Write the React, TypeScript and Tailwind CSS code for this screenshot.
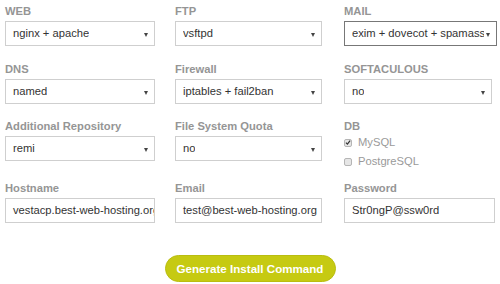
import React from "react";

type SelectProps = { value: string; focused?: boolean; width: string };

function Select({ value, focused, width }: SelectProps) {
  return (
    <div
      className={`relative flex h-[25px] items-center bg-white pl-[7px] ${width} ${
        focused ? "border border-[#777] pr-[12px]" : "border border-[#cfcfcf] pr-[16px]"
      }`}
    >
      <span className="overflow-hidden whitespace-nowrap text-[11.2px] text-[#333]">{value}</span>
      <span className="absolute right-[6px] top-[11px] h-0 w-0 border-x-[2.5px] border-t-[4px] border-x-transparent border-t-[#444]" />
    </div>
  );
}

function TextInput({ value, width }: { value: string; width: string }) {
  return (
    <div className={`flex h-[25px] items-center overflow-hidden border border-[#cfcfcf] bg-white pl-[7px] ${width}`}>
      <span className="whitespace-nowrap text-[11.2px] text-[#333]">{value}</span>
    </div>
  );
}

function Label({ children }: { children: React.ReactNode }) {
  return <div className="mb-[3px] text-[11.2px] font-bold leading-[14px] text-[#959595]">{children}</div>;
}

function Check({ label, checked }: { label: string; checked?: boolean }) {
  return (
    <div className="flex h-[19px] items-center">
      <span className="flex h-[8px] w-[8px] items-center justify-center rounded-[2px] border border-[#b5b5b5] bg-[#e6e6e6]">
        {checked && (
          <svg viewBox="0 0 8 8" className="h-[7px] w-[7px]">
            <path d="M1.2 4.2 L3.2 6.2 L6.8 1.5" fill="none" stroke="#333" strokeWidth="1.6" />
          </svg>
        )}
      </span>
      <span className="ml-[6px] text-[11.2px] text-[#9a9a9a]">{label}</span>
    </div>
  );
}

export default function App() {
  return (
    <div className="h-[284px] w-[500px] bg-white pl-[5px] pt-[4px] font-['Liberation_Sans',Arial,sans-serif]">
      <div className="flex items-start">
        <div className="w-[150px]">
          <Label>WEB</Label>
          <Select value="nginx + apache" width="w-[150px]" />
        </div>
        <div className="ml-[20px] w-[147px]">
          <Label>FTP</Label>
          <Select value="vsftpd" width="w-[147px]" />
        </div>
        <div className="ml-[22px] w-[153px]">
          <Label>MAIL</Label>
          <Select value="exim + dovecot + spamassassin" focused width="w-[153px]" />
        </div>
      </div>

      <div className="mt-[16px] flex items-start">
        <div className="w-[150px]">
          <Label>DNS</Label>
          <Select value="named" width="w-[150px]" />
        </div>
        <div className="ml-[20px] w-[147px]">
          <Label>Firewall</Label>
          <Select value="iptables + fail2ban" width="w-[147px]" />
        </div>
        <div className="ml-[22px] w-[148px]">
          <Label>SOFTACULOUS</Label>
          <Select value="no" width="w-[148px]" />
        </div>
      </div>

      <div className="mt-[15px] flex items-start">
        <div className="w-[150px]">
          <Label>Additional Repository</Label>
          <Select value="remi" width="w-[150px]" />
        </div>
        <div className="ml-[20px] w-[147px]">
          <Label>File System Quota</Label>
          <Select value="no" width="w-[147px]" />
        </div>
        <div className="ml-[22px] w-[148px]">
          <div className="text-[11.2px] font-bold leading-[14px] text-[#959595]">DB</div>
          <Check label="MySQL" checked />
          <Check label="PostgreSQL" />
        </div>
      </div>

      <div className="mt-[10px] flex items-start">
        <div className="w-[150px]">
          <Label>Hostname</Label>
          <TextInput value="vestacp.best-web-hosting.org" width="w-[150px]" />
        </div>
        <div className="ml-[20px] w-[147px]">
          <Label>Email</Label>
          <TextInput value="test@best-web-hosting.org" width="w-[147px]" />
        </div>
        <div className="ml-[22px] w-[151px]">
          <Label>Password</Label>
          <TextInput value="Str0ngP@ssw0rd" width="w-[151px]" />
        </div>
      </div>

      <div className="mt-[32px] flex justify-center pr-[5px]">
        <button
          type="button"
          className="h-[27px] w-[171px] rounded-full border border-[#b9bd10] bg-[#c6ca12] text-[11.6px] font-bold text-white"
        >
          Generate Install Command
        </button>
      </div>
    </div>
  );
}
